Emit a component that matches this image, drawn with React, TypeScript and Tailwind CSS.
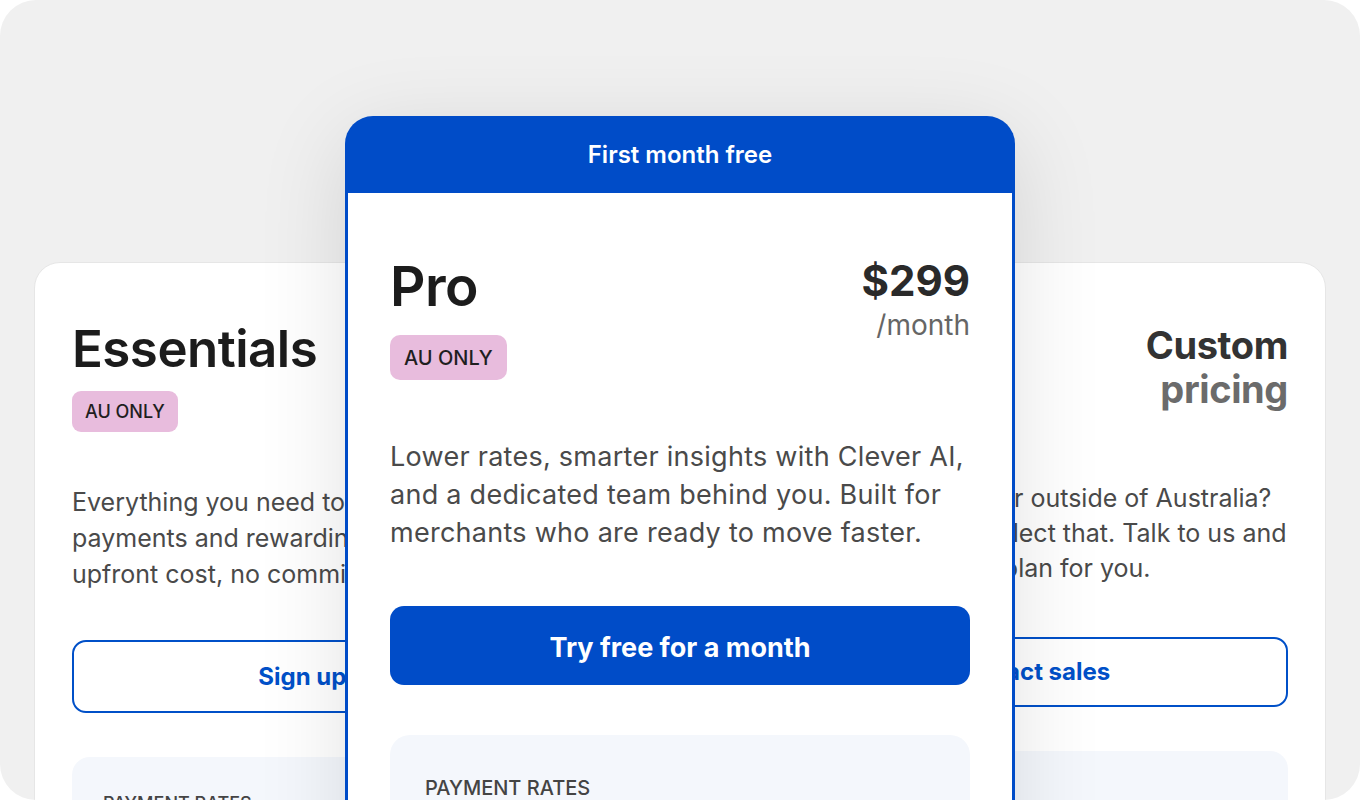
const plans = {
  essentials: {
    title: "Essentials",
    lines: [
      "Everything you need to start accepting",
      "payments and rewarding loyal customers. No",
      "upfront cost, no commitment.",
    ],
    cta: "Sign up now",
  },
  custom: {
    lines: [
      "A larger business, or outside of Australia?",
      "Your rates could reflect that. Talk to us and",
      "we'll build a better plan for you.",
    ],
    cta: "Contact sales",
  },
  pro: {
    lines: [
      "Lower rates, smarter insights with Clever AI,",
      "and a dedicated team behind you. Built for",
      "merchants who are ready to move faster.",
    ],
  },
};

const Badge = ({ big }: { big?: boolean }) => (
  <span
    className={
      big
        ? "inline-flex items-center h-[45px] px-[14px] rounded-[10px] bg-[#e8bcdd] text-[20px] font-medium text-[#1f1f1f]"
        : "inline-flex items-center h-[41px] px-[13px] rounded-[9px] bg-[#e8bcdd] text-[18px] font-medium text-[#1f1f1f]"
    }
  >
    AU ONLY
  </span>
);

const Lines = ({ lines }: { lines: string[] }) => (
  <>
    {lines.map((line, i) => (
      <span key={i} className="block whitespace-nowrap">
        {line}
      </span>
    ))}
  </>
);

export default function App() {
  return (
    <div className="w-[1360px] h-[800px] bg-white font-['Inter',sans-serif]">
      <div className="h-full rounded-[36px] bg-[#f0f0f0] overflow-hidden">
        <div className="flex items-start pl-[34px] pt-[116px]">
          {/* Essentials */}
          <div className="mt-[146px] w-[584px] shrink-0 bg-white border border-[#e6e6e6] rounded-[26px] px-[37px] pt-[60px] pb-[40px]">
            <h3 className="text-[51px] leading-none [font-weight:600] text-[#1c1c1c] tracking-[-0.01em]">
              {plans.essentials.title}
            </h3>
            <div className="mt-[17px]">
              <Badge />
            </div>
            <p className="mt-[52px] text-[25px] leading-[36px] text-[#4a4a4a]">
              <Lines lines={plans.essentials.lines} />
            </p>
            <button className="mt-[48px] w-full h-[73px] rounded-[14px] border-2 border-[#0050c8] text-[24px] font-bold text-[#0050c8]">
              <span className="relative left-[4px]">{plans.essentials.cta}</span>
            </button>
            <div className="mt-[44px] h-[200px] rounded-[18px] bg-[#f4f7fc] px-[31px] pt-[33px]">
              <span className="text-[18px] font-medium text-[#444]">PAYMENT RATES</span>
            </div>
          </div>

          {/* Pro */}
          <div className="relative z-10 -ml-[273px] w-[670px] shrink-0 rounded-t-[28px] bg-[#004cc8] px-[3px] shadow-[0_20px_90px_0_rgba(0,0,0,0.12)]">
            <div className="h-[77px] flex items-center justify-center text-white text-[24px] font-semibold">
              First month free
            </div>
            <div className="bg-white px-[42px] pt-[66px] pb-[60px]">
              <div className="flex items-start justify-between">
                <div>
                  <h3 className="text-[55px] leading-none [font-weight:600] text-[#1c1c1c] tracking-[-0.01em]">
                    Pro
                  </h3>
                  <div className="mt-[21px]">
                    <Badge big />
                  </div>
                </div>
                <div className="flex flex-col items-end pt-[1px]">
                  <span className="text-[42px] leading-none font-bold text-[#2a2a2a]">$299</span>
                  <span className="mt-[9px] text-[28px] leading-none text-[#666]">/month</span>
                </div>
              </div>
              <p className="mt-[58px] text-[27px] leading-[38px] tracking-[0.01em] text-[#4a4a4a]">
                <Lines lines={plans.pro.lines} />
              </p>
              <button className="mt-[54px] w-full h-[79px] rounded-[14px] bg-[#004cc8] text-white text-[27px] font-bold">
                <span className="relative top-[3px]">Try free for a month</span>
              </button>
              <div className="mt-[50px] h-[200px] rounded-[20px] bg-[#f4f7fc] px-[35px] pt-[38px]">
                <span className="text-[20px] font-medium text-[#444]">PAYMENT RATES</span>
              </div>
            </div>
          </div>

          {/* Custom */}
          <div className="mt-[146px] -ml-[273px] w-[584px] shrink-0 bg-white border border-[#e6e6e6] rounded-[26px] px-[37px] pt-[60px] pb-[40px]">
            <h3 className="text-right text-[38px] leading-[44px] font-bold tracking-[-0.01em]">
              <span className="block text-[#333]">Custom</span>
              <span className="block text-[#6b6b6b]">pricing</span>
            </h3>
            <p className="mt-[70px] text-[25px] leading-[35px] text-[#4a4a4a]">
              <Lines lines={plans.custom.lines} />
            </p>
            <button className="mt-[51px] w-full h-[70px] rounded-[14px] border-2 border-[#0050c8] text-[24px] font-bold text-[#0050c8]">
              <span className="relative left-[-4px]">{plans.custom.cta}</span>
            </button>
            <div className="mt-[44px] h-[200px] rounded-[18px] bg-[#f4f7fc] px-[31px] pt-[33px]">
              <span className="text-[18px] font-medium text-[#444]">PAYMENT RATES</span>
            </div>
          </div>
        </div>
      </div>
    </div>
  );
}
